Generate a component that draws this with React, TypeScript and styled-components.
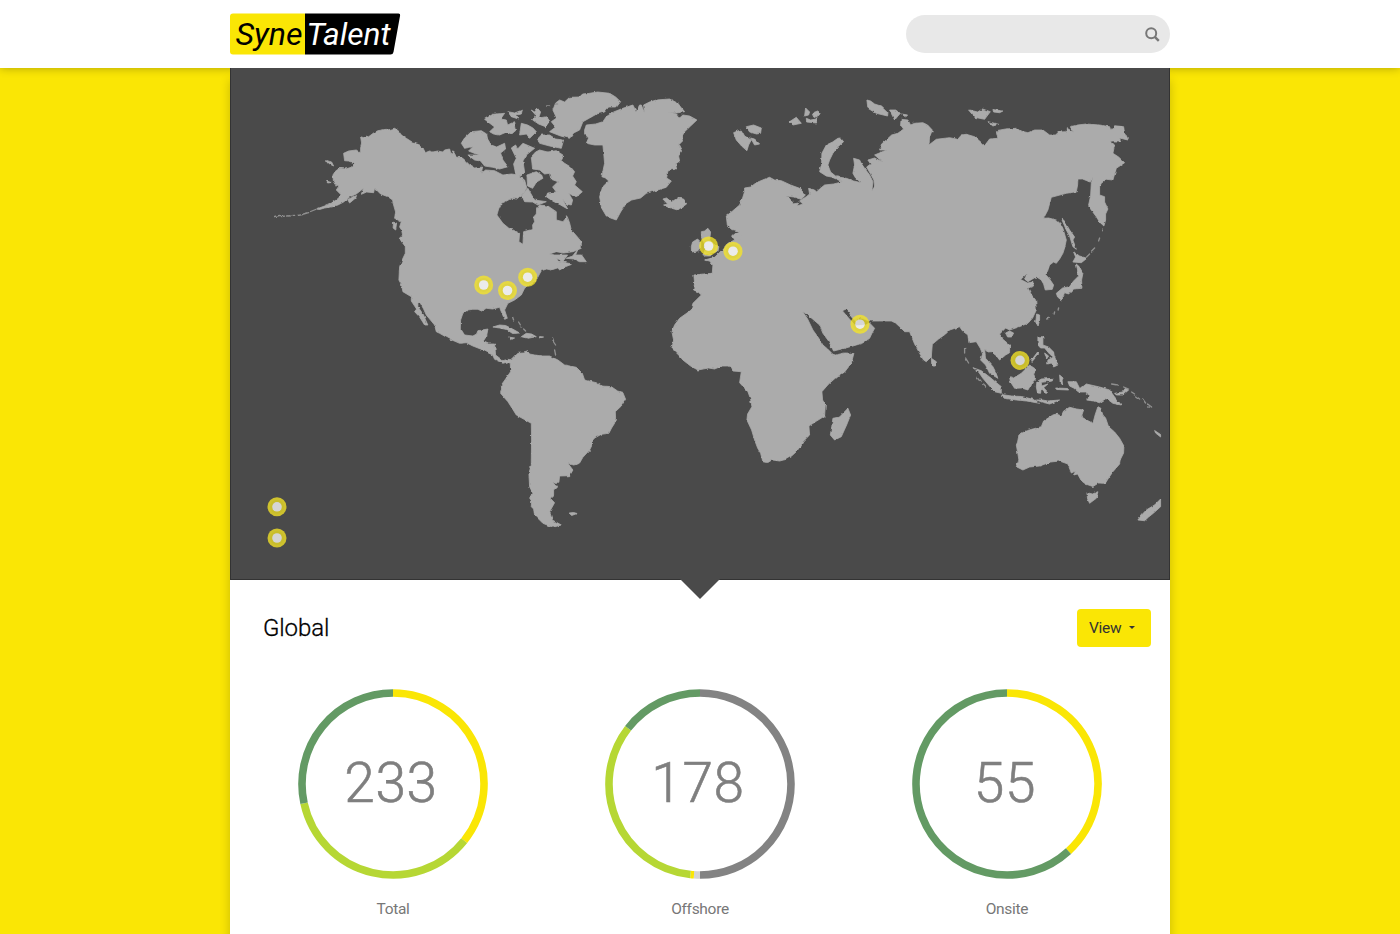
import React from "react";
import styled, { createGlobalStyle } from "styled-components";

const GlobalStyle = createGlobalStyle`
  * { box-sizing: border-box; }
  html, body { margin: 0; height: 934px; overflow: hidden; }
  body { background: #fae605; font-family: Roboto, "Liberation Sans", sans-serif; color: #808080; }
`;

const Page = styled.div`
  display: flex;
  flex-direction: column;
  height: 934px;
  overflow: hidden;
`;

const Header = styled.header`
  position: relative;
  z-index: 2;
  flex: none;
  height: 68px;
  background: #fff;
  box-shadow: 0 0 9px rgba(0, 0, 0, 0.3);
`;

const HeaderInner = styled.div`
  width: 940px;
  height: 68px;
  margin: 0 auto;
  display: flex;
  align-items: center;
  justify-content: space-between;
`;

const LogoArt = styled.svg`
  display: block;
  width: 171px;
  height: 42px;
  font: italic 400 30.5px Roboto, sans-serif;
`;

const SearchBox = styled.div`
  width: 264px;
  height: 38px;
  border-radius: 19px;
  background: #e8e8e8;
  display: flex;
  align-items: center;
  justify-content: flex-end;
  padding-right: 10px;
`;

const Panel = styled.main`
  position: relative;
  z-index: 3;
  flex: 1;
  width: 940px;
  margin: 0 auto;
  background: #fff;
  box-shadow: 0 12px 10px rgba(0, 0, 0, 0.2);
`;

const MapSection = styled.section`
  position: relative;
  height: 512px;
  background: #4a4a4a;
  &::after {
    content: "";
    position: absolute;
    inset: 0;
    border: solid #333;
    border-width: 0 1px 1px;
  }
`;

const MapArt = styled.svg`
  display: block;
  width: 940px;
  height: 512px;
`;

const Pointer = styled.div`
  position: absolute;
  z-index: 1;
  left: 50%;
  bottom: -19px;
  margin-left: -20px;
  border: 20px solid transparent;
  border-top-color: #4a4a4a;
  border-bottom: 0;
`;

const TitleRow = styled.div`
  display: flex;
  align-items: center;
  justify-content: space-between;
  height: 38px;
  margin-top: 29px;
  padding: 0 19px 0 33px;
`;

const Title = styled.h1`
  margin: 0;
  font-size: 24px;
  line-height: 38px;
  font-weight: 300;
  letter-spacing: -0.1px;
  color: #000;
  -webkit-text-stroke: 0.3px #000;
`;

const ViewButton = styled.button`
  display: flex;
  align-items: center;
  gap: 8px;
  width: 74px;
  height: 38px;
  padding: 0 0 0 12px;
  border: 0;
  border-radius: 4px;
  background: #fae605;
  color: #333;
  font: 400 15.5px Roboto, sans-serif;
  letter-spacing: -0.3px;
`;

const Caret = styled.span`
  margin-top: -2px;
  border: 3.5px solid transparent;
  border-top-color: #333;
  border-bottom: 0;
`;

const Charts = styled.div`
  display: grid;
  grid-template-columns: repeat(3, 307px);
  justify-content: center;
  margin-top: 42px;
`;

const ChartCell = styled.figure`
  margin: 0;
  display: flex;
  flex-direction: column;
  align-items: center;
`;

const Dial = styled.div`
  display: grid;
  place-items: center;
  width: 190px;
  height: 190px;
  > * { grid-area: 1 / 1; }
`;

const Figure = styled.span`
  font-size: 55px;
  line-height: 60px;
  font-weight: 300;
  letter-spacing: 0.7px;
  color: #7f7f7f;
  padding: 0 4px 2px 0;
  -webkit-text-stroke: 0.6px #7f7f7f;
`;

const Caption = styled.figcaption`
  margin-top: 20px;
  font-size: 15.5px;
  line-height: 20px;
  font-weight: 400;
  letter-spacing: -0.3px;
  color: #777;
`;

const land = [
  // North and South America
  "341.7 195 336.7 190 339.3 186 334 183.3 333.3 175 336 171 340 168.3 346 169 351.7 167.3 355 163.3 349 161 345 160.7 344 153.3 349 151 356.7 150 361 153 361 147 362 143 361 136.7 365 138 370 136 374 133 378.3 130.7 386.7 129.3 388 130 395 128.3 399 131 401.7 135 406.7 138.3 414 143 420 145 423.3 147.7 425.7 152.7 430 151 433.3 152 438 151 443.3 152 445 150 450 149 451.7 155 453.3 150.7 456.7 156.7 463.3 158.3 470 165 475 168 483 167 481.7 173.3 486 170 495 170.7 503.3 175 512 174 518.3 175 525 180 527.3 188.3 521.7 195 517 199 511.7 198.3 507 201 501.7 203.3 499 209 497.3 215 503.3 223.3 509 228 515 230.7 520 233.3 519.3 241.7 523.3 244.3 524 231.7 533.3 229.3 533 225 535 221.7 534 217 536.7 214 537 209 540 205 548.3 206 556.7 211.7 556.7 220 563.3 221.7 567.7 216.7 570 223 571.7 230 577 236 581.7 241.7 581.7 248.3 573.3 251.7 564 253 556.7 251.7 550 254 555 255 568 255 563 261.7 557 258 560 264 561.7 266.7 551.7 270 547 269 541.7 270.7 536.7 280 531 284 525 288.3 521.7 295 515 300 508.3 303.3 506 308 505 310 507.7 318.3 505 319.3 501 310 500 307.3 493 309 486.7 308.3 482 311 478.3 309.3 473.3 309.3 468 310 463.3 313.3 461 320 460.7 328.3 465 335 473.3 336 477 334 478.3 330.7 488.3 329 487 336 483.3 341.7 489 344 495 344 496 355 503.3 360.7 508.3 359.3 512 360 518.3 353.3 524 353 528.3 351.7 530 354 535 355 543 356 550 356 558.3 360 565 365 576.7 367.3 582.7 373.3 585 380 596.7 382.7 602 386 611.7 386.7 618 391 623.3 392.7 626 399.3 621.7 406 615.7 411.7 616 418 615 423.3 612 428 609.3 433.3 601.7 434.3 595 438 591.7 441.7 592 446 590 450 583.3 457.3 580 463 578.3 464 574 465 568.3 463.3 573.3 470 570 475.7 560 476 559.3 482.3 553.3 482.3 557.3 486.7 554 490 554 495 550.7 498.3 555 502.7 550 511.7 552.7 520 561.7 525 553.3 527.3 543.3 523.3 535 515 534 509 531.7 506.7 532 501 530 498 533.3 493.3 530 486.7 529.3 473.3 531.7 465 531.7 460 532 440 531.7 423.3 516.7 415 513 409 508.3 401.7 501 393.3 502 389 501.7 385 506 379 511 371.7 510.7 363.3 508 362 503.3 363.3 495 359.3 493 355 488.3 352.7 481 349 473.3 346 466.7 342.7 460 343.3 450 339 440 333.3 436.7 331.7 435 325 426.7 315 424 309 420 301.7 418.3 302 418.3 306.7 424 315 426 320 428.3 325 425 325 420 317 415 311.7 417 309 411.7 301 411.7 296.7 403.3 291.7 402 285 399.3 280 400 266.7 403 259 405.7 253.3 405.7 246.7 400 238.3 403 235 402 230 400 227 401.7 221.7 395 218.3 396 212 394 205 393 200 388.3 196.7 381 194 375 188 374 192.7 367 192 361.7 194.3 364 188.3 356.7 194 350 197 344 202 338.3 205 331 207 325 208 320 209.5 317 209 325 206 332 203 338 199",
  // Greenland
  "585 130 586.7 125 596 124 603.3 121.7 606.7 116.7 614 112 623.3 108.3 633.3 105 636.7 111.7 640 105 641.7 105 645 113.3 644 105 650 102 656.7 100 670 99 678.3 103.3 685 111.7 677 113 668.3 112.3 677 114 680 118 683.3 115 690 116 697.3 120 691 126 685 131.7 682 137 683 141 679 145 682 151 679 156 680 161 676 164 677 169 671 170 668.3 171 667 178 671.7 181 666.7 187.3 658 190 646.7 193.3 641 198 632 200 626.7 203.3 621 212 616.7 220 611 218 606.7 216 602 208 600 196.7 603 187 609 181 606 178 602.3 176.7 604 168 605 163.3 604 152 603.3 145 595 145 586.7 143.3 589 138 585 134",
  // Canadian Arctic islands
  "553.3 110 556 103 560 100 565 102 570 97.3 580 97 583 94 590 93.3 598 92 610 93.3 616 97 621 101.7 617 107 609 107 605 112 597 114 590 118 583.3 121.7 580 130 574 133 570 138.3 561 136 550 131.7 556 127 551.7 121.7 557 118",
  "541.7 135 550 135 556 139 564 140 561.7 148.3 550 146 540 143.3 538 139",
  "485 119.3 493.3 114.3 505 113.3 501 119 506.7 120 508 125 515 121.7 516.7 130 512 134 507 132 500 135 494 134 490 131.7 495 127",
  "508.3 111.7 515 113 522.7 110 521.7 114 517 115 519 119 511.7 116.7",
  "531.7 110 535 112 538 108.3 541 112 539 118 547 116.7 550 121 546 126.7 539 124 533 120 536 115",
  "521.7 123.3 528 125 533.3 128 536.7 131.7 530 138.3 527 134 520 135",
  "461.7 143.3 465 138 471.7 131.7 481.7 130.7 487 134 488 139 491.7 145 497 147 505 143.3 506 149 501 153 503.3 160 508.3 166.7 500 169 493.3 167.3 485 166 481 161 475 160 468.3 155 479 155 469 151 473.3 146.7 465 148.3",
  "511.7 148 516 145 518 149 523.3 143.3 535 148.3 526.7 155 523.3 161 525 172 517 178 514 164 516.7 158.3",
  "531.7 156.7 536 152 540 150 548 152 556.7 150.7 563.3 155 561 160 565 163.3 571 167 575 171.7 573 176 576.7 181.7 575 185 582.7 191.7 579 195 575 196.7 569 193 573 200 571.7 205 567 204 563 199 568 209 561 205 553 201 546.7 196.7 548 193 556.7 192 553 187 558.3 181.7 551 179 550 173.3 545 174 540 170 533 169",
  "527.3 175 536.7 171.7 542 175 543.3 178.3 537 182 533 188.3 528 186",
  "522 195 528.3 188.3 532 195 535 200 546.7 201.7 538.3 205 533 202 525 201.7",
  "566.7 258.3 573 256 578.3 249.3 576 255 582 255 586.7 261.7 580 261.7 574 259",
  "555 263 562 262 573 264 565 267 560 270",
  "663.3 199 667 198 672 202 678 198 684 199 687 204 678 210 668 207 664 205 668 204",
  // Arctic Eurasia
  "734 132.7 738 131 741.7 130 745 136 751.7 140 749 145 747.3 150.7 742 146 736.7 140",
  "746.7 126.7 754 125 761.7 128 761 133.3 757 134 750 132",
  "751 138 755 139 760 144 755 145",
  "790 121.7 796.7 117.3 801.7 123.3 793.3 125",
  "806 108 810 112 809 115 805 116", "813 113 818 111 821 113 817 118 814 117", "806.7 118.3 811 120 816.7 119 817 123 807 122",
  "838.3 138.3 841 138 844 141.7 838 147 833.3 153.3 830 160 828.3 165 831 172 843.3 182 832 177 826.7 176 820 171.7 822 164 822.3 153.3 826.7 145 833 142",
  "867.3 100 871 101 875 104 881 106 888.3 113 888 116 876.7 113.3 868.3 108.3",
  "890 110 896 110 900.7 113.3 895 120", "902 114 908 115 906 117",
  "969 110 974 111 978 112 983 109 990.7 111.7 985 119.3 975 117.3", "993.3 109.5 1003.3 111 1000 112.7 994 112", "988.3 121.7 999 124.3 993.3 126",
  // Europe, Asia and Africa
  "694.3 275 704 274 712.7 273.3 713.3 265 710 261 705 260 715 257.3 721.7 250.7 728.3 243.3 735 240 733 236 735 234 740 231.5 735 230 731.7 229.3 727.7 225 726.7 216 733 211 740 205 743 198 745 191.7 745 188 751 187 756.7 182.7 763 180 770 177.3 775 180 781.7 180.7 791 185 800 188.3 805.7 195 801.7 199.3 794 197 786.7 196 793.3 200.7 793 204 799 203 797.3 206 803.3 204 800 201 806.7 196.7 810 194 809 188.3 815 190 817 192 820 189 825 185 834 184 843.3 181.7 836.7 176.7 846.7 178.3 854 181 861.7 182.7 856 178 853.3 173.3 855 165 854 158.3 860 160 862 164 865 168.3 870 175 873.3 181.7 872.3 190.7 875 186.7 874.3 180 871 174 867 167 871 164 868.3 160 875 158 883 162 875 155 887 150 880 150 882 144 886.7 140 892 135 898.3 133.3 904 129 901 125 901.5 119.3 908.3 120 911 125 915 123.3 923.3 122.7 928 125 932.7 130 930 137 929.3 145 936.7 139.3 950 137.7 958 139.3 962 135 966.7 134.3 975 136.7 980 141 985 145.7 990 139 998.3 138.3 996.7 130.7 1006 129 1016.7 128.3 1021 131 1028.3 132.7 1035 130 1043.3 130 1050 135 1056 135 1059 132 1066.7 131.7 1066.7 127.7 1074 132.3 1070.7 126.7 1078 125 1086.7 124 1100 125 1110 126.7 1111 130 1115 128 1115 125.7 1124 126.7 1125 133.3 1128.3 140 1120 138 1121 141 1110.7 141 1115 145 1113.3 153.3 1119 157 1125 162.7 1116.7 168.3 1113.3 180 1106.7 179.3 1101.7 183.3 1100 186.7 1100 195 1105 196.7 1105 202 1108.3 209 1106 214 1106 220 1104.3 226 1100 222 1096.7 216.7 1091 209 1089 205 1091 196 1091.7 183.3 1092.7 177.3 1090 182 1087.3 180.7 1083 179 1078.3 179 1078 185 1076.7 191.7 1066.7 193.3 1051.7 197.3 1048.3 210 1044 218.3 1049 218 1056.7 220 1061 224 1063.3 228.3 1066.7 240 1065 248 1063.3 253.3 1060 259 1056.7 263.3 1054 262 1050 265 1048 271 1045.7 274.3 1050 279 1054 285 1052.7 289.3 1045.7 290 1044 284 1041.7 280 1036.7 276.7 1028.3 281.7 1025 279 1028.3 272.7 1021 279.5 1028 283 1033 282 1034 286 1028.3 288 1032 295 1036 300 1036.7 310 1033 318 1028.3 323.3 1019 327 1010 330 1006 328 1000 334 1003 339 1010 345 1010 352.7 1006 355 1000 360 997 356 991.7 351.7 988 352 985 349.3 986 358.3 993.3 366.7 996 372 998.3 378.3 990 373.3 986 365 981 360 983 354 980.7 348.3 976.7 341.7 969.3 342.7 968.3 335 963 331 960 326.7 950 330 946 334 939 339 932.7 344.3 931.7 356.7 926.7 361.7 924 360 920 353.3 915 344 910 331.7 905 331.7 900 326.7 896 323 891.7 321 880 321 870 321 861 318 856 321 851.7 317 850 313 846.7 309 842.7 310.7 849 318 856 326 866 325 870 323 875 328.3 872 334 870 338.3 863 343 856.7 345 846 348 834 351 831 345 829 341 823.3 333.3 820 325 813 319 808.3 315 803 311.5 808 319 813.3 330 819 338 823.3 345 828 349 833.3 354.3 836 355 845 353 854.3 353.3 851.7 363.3 845 372 836.7 377.3 829 384 822.3 391.7 823 400 825.7 405 825 416 817 421 809.3 426 810 435 803.3 441.7 801 446 796.7 451.7 792 456 786.7 459.3 780 461 773 460 767 462.5 763.3 461.7 761 453.3 758 448 755 440 752 430 747.3 420 748 414 752.3 406.7 751 399 748.3 391.7 740 382.7 741.7 371.7 733.3 371 731 367 728.3 366 722 366 715 369 709 368 698.3 370 691 366 683.3 360 680 356 672.3 348.3 674 340 672.3 331.7 675 325 680 318.3 686 314 691.7 310 693.3 303.3 701.7 295 698.3 291.7 694 290 695 283",
  // British Isles and Denmark
  "701.7 231.7 705 231 708.3 228.3 711 232 710 240 714 244 719.3 246.7 718.3 251.7 711 253 703.3 255 706 250 705 244 702 238",
  "691.7 246.7 693 242 698 239 701 242 701 247 698 251 692 252",
  "704 256 712 254 711 256", "739 235 742 236 742 239 739 239",
  // Madagascar and Sri Lanka
  "848.3 408.3 851 415 847 425 841.7 436.7 835 440 830.7 435 832 428 833.3 418.3 840 417", "931.7 358.3 936.7 361.7 936.7 366 932.3 366",
  // Sakhalin and Japan
  "1061.7 218.3 1065 221 1070 230 1075 237 1073.3 240 1076.7 249.3 1073.3 246.7 1070 236 1066.7 230",
  "1074 252 1080 256 1087.3 258.3 1081.7 262.7 1073.3 262 1076 257",
  "1076.7 264 1080 267 1083.3 273.3 1082 280 1082.3 288.3 1074 289 1069 294 1065 292.7 1061.7 300 1058 297 1056.7 293.3 1063 288 1070 286.7 1074 281 1078 277 1078 270",
  // South-east Asia
  "1037 314 1040 315 1040 320 1038.5 326 1036 322", "1006 333 1010 331 1014 333 1012 337 1008 337",
  "973.3 367.7 981.7 370.7 990 377 996 382 1001.7 386.7 1001.7 393.3 995 391.7 989 385 983.3 378.3 979 372",
  "1001.7 394.5 1012 396 1022 396.5 1033.3 399.3 1040 403.3 1027 401 1016.7 400 1003.3 398",
  "1037 400 1043 400 1048 401 1060 400 1050 404 1042 402",
  "1010 376.7 1014 378 1021.7 373.3 1026 369 1030 365 1037.3 370 1034 374 1036 379 1033 382 1028.3 390 1022 388 1015 388.3 1010.7 381.7",
  "1037.3 381.7 1041.7 379 1053.3 378.3 1052.7 381 1041.7 382.3 1042 386 1048.3 384 1044 387.7 1048.3 392.3 1045 392 1041.5 388 1041 393.3 1038 393 1036.7 387",
  "1060 375 1063.5 378 1062.5 380 1063 385 1060.5 382", "1056 388 1068 388.5 1069 390 1057 389.5",
  "1038.3 336.7 1043.3 336.7 1043.3 345 1049 347 1054 352 1055 358 1050 354 1045 348 1041 348 1038.3 345",
  "1048.3 360 1052 358 1055 356.7 1058.3 365 1054 367 1052 363 1048 364", "1038 352 1039 354 1032.5 361.5 1032 360", "1045 353 1049 356 1047 359",
  "1068.3 381.7 1076.7 381.7 1080 388.3 1083 387 1086.7 384 1100 387 1110 390 1115 397 1121.7 405 1113.3 403.3 1106.7 398.3 1100 402.7 1094 401 1087 400 1091 396 1085 392 1079 392 1074 388 1070 386",
  "1115 393.3 1123 392 1126 388 1129 390 1123.3 395 1116.7 395", "1155 430.5 1161 434.5 1161 437 1156 433",
  // Australia and New Zealand
  "1098.3 406.7 1101 408 1103.3 415 1106 418 1109 426.7 1115 432 1120 438.3 1124.3 446 1124 453 1121 459 1120 464 1113.3 471.7 1109 478 1105.7 483.3 1099 483 1093.3 486.5 1086 484 1081.7 480.7 1078 474 1074 475 1076 471 1071.7 473 1068.3 464 1060 461 1051 462 1040 466 1030 467 1023.3 470 1016.7 466.7 1019.3 460 1018 452 1016.7 445 1018 442 1019.3 435 1026 431 1041.7 426.7 1044 421 1053.3 415 1057 414 1061.7 416 1064 411 1070 407.3 1077 409 1084 410 1081.7 416.7 1087 420 1093.3 423.3 1095.5 415",
  "1087.3 492.7 1093 494 1098.3 491.7 1096.7 498.3 1090 503.3 1088 499",
  "1161 499 1161 506.7 1154 513 1149 517 1145 520.7 1138.3 520 1142 515 1146.7 510 1155 505",
  // Caribbean and Falklands
  "493.3 327 500 325 506 325.5 513 329 520 333 513 333.5 507 329.5 500 328", "521.7 336.7 526.7 333.3 532 334 536.7 336.7 528.3 338.3", "509 337 515 338 512 339.5", "540 336.5 544 337 540 338", "569.5 513 574 512.5 577.5 513.5 572 515.5",
  // Alaskan islands
  "327 160.5 332 162 334 166 330 164", "327 181 331.5 182.5 328 183", "348 199.5 357 195.5 356 198 350 203", "394 222 397 223 396 230 393.5 228", "400 238 404 240 409.5 247 403 243",
];

const islets = [
  "M275 216.5l5-1M282 216.5l3-.3M288 216l7-.5M298 215.5l5-.8M304 214l5-1.3M311 211.5l5-2",
  "M1087 257l3-3M1092 251l3-3M1099 241l1-3M1102 231l.3-2M1059 308l-.5 2M1055 312l-.5 2M1047 319l3-.8",
  "M1132 392l3 2M1136 396l4 3M1143 399l3 4M1148 404l4 3M1112 384l6 1M1124 387l5 2",
  "M513 317l1 3M519 322l3 5M524 329l2 2M553 338l1 3M554 342l2 3M555 350l1 5",
  "M965 348l0 5M966 358l3 5M977 377l4 5M984 384l2 2M1148 407l2 0M547 106l3 0M556 104l2 0",
];

const sites = [
  [483.7, 285], [507.5, 290.5], [527.7, 277.2], [708.6, 246], [733, 251.2],
  [860, 324.2], [1020, 360.4], [277, 506.8], [277, 538],
];

const MapMarker = ({ x, y }: { x: number; y: number }) => (
  <g transform={`translate(${x} ${y})`} opacity={0.77}>
    <circle r={9.5} fill="#f7e626" />
    <circle r={7} fill="#efe024" />
    <circle r={4.8} fill="#fff" />
  </g>
);

const WorldMap = () => (
  <MapArt viewBox="230 68 940 512">
    <defs>
      <filter id="coast" x="-2%" y="-2%" width="104%" height="104%">
        <feTurbulence type="fractalNoise" baseFrequency="0.2" numOctaves={2} seed={4} />
        <feDisplacementMap in="SourceGraphic" scale={2.6} xChannelSelector="R" yChannelSelector="G" />
      </filter>
    </defs>
    <g fill="#ababab" filter="url(#coast)" transform="translate(-.4 0)">
      <g stroke="#ababab" strokeWidth={0.8} strokeLinejoin="round">
        {land.map((points, i) => <polygon key={i} points={points} />)}
      </g>
      <g fill="none" stroke="#909090" strokeWidth={1.3} strokeLinecap="round">
        {islets.map((d, i) => <path key={i} d={d} />)}
      </g>
    </g>
    {sites.map(([x, y]) => <MapMarker key={`${x}-${y}`} x={x} y={y} />)}
  </MapArt>
);

const Logo = () => (
  <LogoArt viewBox="0 0 171 42">
    <path d="M3 .5H75V41.500H3a3 3 0 0 1-3-3V3.500a3 3 0 0 1 3-3z" fill="#fae605" />
    <path d="M75 .5H168.500q2 0 1.600 2L163.500 39q-.5 2.500-3 2.500H75z" fill="#000" />
    <text x="5.500" y="32" textLength="67" lengthAdjust="spacingAndGlyphs" fill="#000">Syne</text>
    <text x="76.500" y="32" textLength="84" lengthAdjust="spacingAndGlyphs" fill="#fff">Talent</text>
  </LogoArt>
);

const SearchIcon = () => (
  <svg width="15" height="15" viewBox="0 0 15 15" fill="none" stroke="#777">
    <circle cx="6.200" cy="6.300" r="5" strokeWidth="2" />
    <path d="M9.800 9.900l4 4" strokeWidth="2.400" />
  </svg>
);

type Slice = { to: number; color: string };

const YELLOW = "#fae605";
const LIME = "#b6d734";
const GREEN = "#639a64";

const stats: { value: number; label: string; slices: Slice[] }[] = [
  { value: 233, label: "Total", slices: [{ to: 128.5, color: YELLOW }, { to: 257.8, color: LIME }, { to: 360, color: GREEN }] },
  { value: 178, label: "Offshore", slices: [{ to: 180, color: "#838383" }, { to: 183.8, color: "#d5d5d5" }, { to: 186, color: YELLOW }, { to: 307.8, color: LIME }, { to: 360, color: GREEN }] },
  { value: 55, label: "Onsite", slices: [{ to: 137.5, color: YELLOW }, { to: 360, color: GREEN }] },
];

const pointAt = (deg: number) => {
  const a = (deg * Math.PI) / 180;
  return `${95 + 91 * Math.sin(a)} ${95 - 91 * Math.cos(a)}`;
};

const Ring = ({ slices }: { slices: Slice[] }) => (
  <svg width="190" height="190" viewBox="0 0 190 190" fill="none" strokeWidth="7.600">
    {slices.map((s, i) => {
      const from = i ? slices[i - 1].to : 0;
      return <path key={i} stroke={s.color} d={`M${pointAt(from)}A91 91 0 ${s.to - from > 180 ? 1 : 0} 1 ${pointAt(s.to)}`} />;
    })}
  </svg>
);

export default function App() {
  return (
    <>
      <GlobalStyle />
      <Page>
        <Header>
          <HeaderInner>
            <Logo />
            <SearchBox><SearchIcon /></SearchBox>
          </HeaderInner>
        </Header>
        <Panel>
          <MapSection>
            <WorldMap />
            <Pointer />
          </MapSection>
          <TitleRow>
            <Title>Global</Title>
            <ViewButton>View<Caret /></ViewButton>
          </TitleRow>
          <Charts>
            {stats.map((s) => (
              <ChartCell key={s.label}>
                <Dial>
                  <Ring slices={s.slices} />
                  <Figure>{s.value}</Figure>
                </Dial>
                <Caption>{s.label}</Caption>
              </ChartCell>
            ))}
          </Charts>
        </Panel>
      </Page>
    </>
  );
}
